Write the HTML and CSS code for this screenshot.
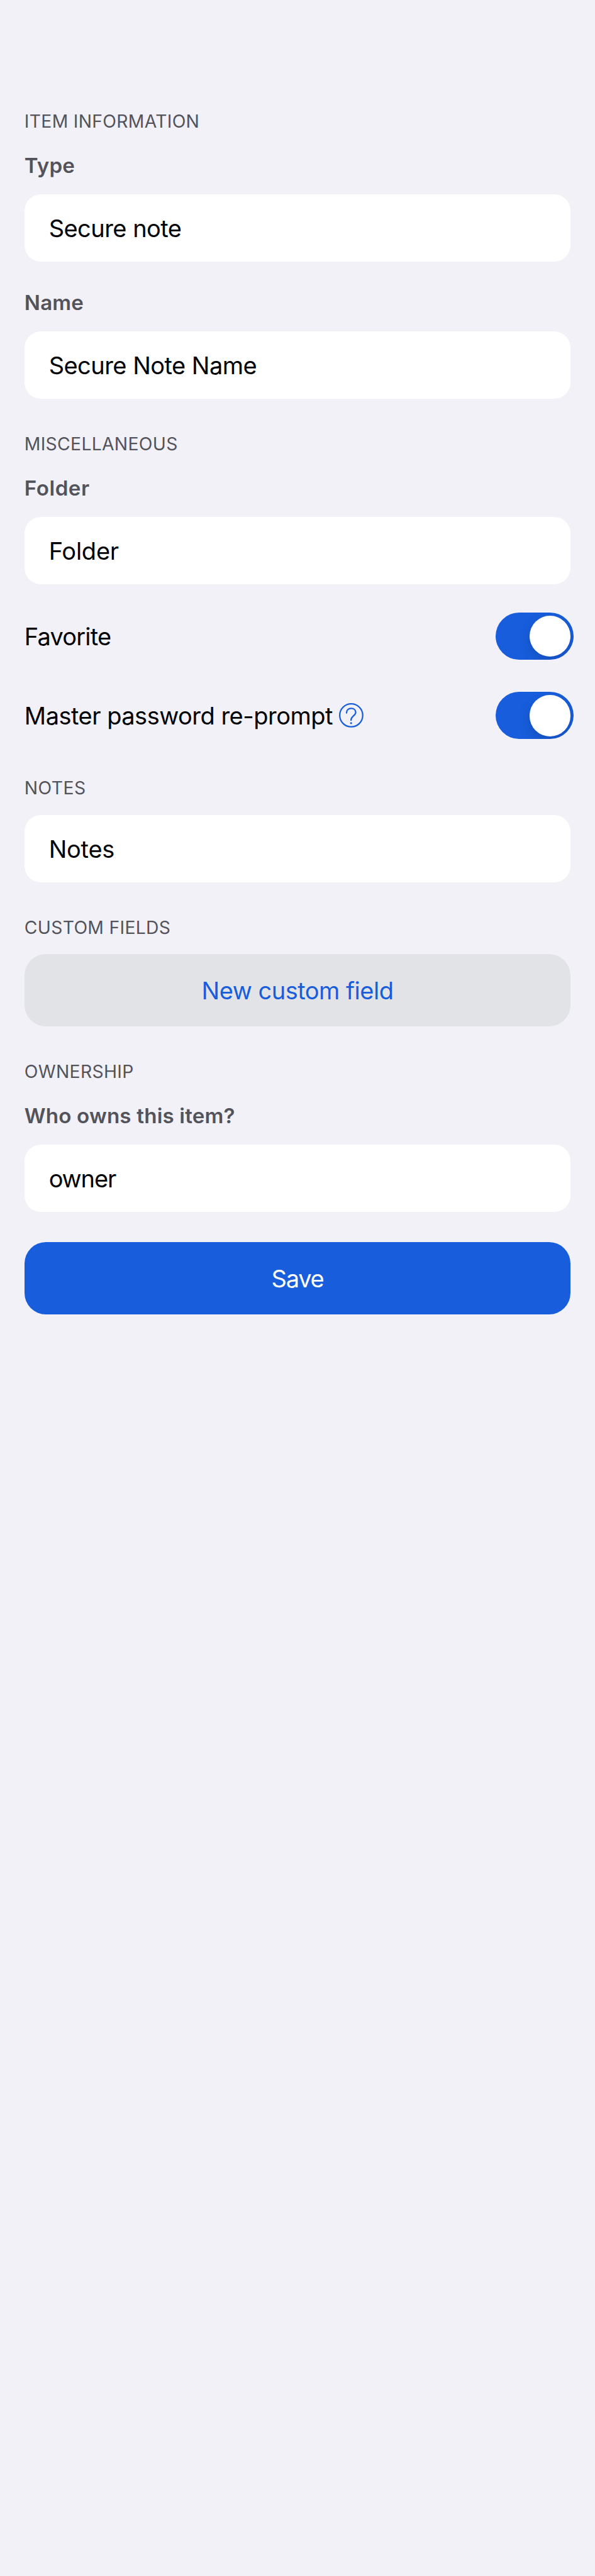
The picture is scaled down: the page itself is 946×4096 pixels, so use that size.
FILE: index.html
```html
<!DOCTYPE html>
<html lang="en">
<head>
<meta charset="utf-8">
<title>Edit item</title>
<link rel="stylesheet" href="styles.css">
</head>
<body>
<main class="form">
  <h2 class="heading">ITEM INFORMATION</h2>
  <label class="label">Type</label>
  <div class="field">Secure note</div>
  <label class="label label-next">Name</label>
  <div class="field">Secure Note Name</div>

  <h2 class="heading">MISCELLANEOUS</h2>
  <label class="label label-wide">Folder</label>
  <div class="field field-short">Folder</div>
  <div class="row">
    <span class="row-text row-text-tight">Favorite</span>
    <span class="toggle"><span class="knob"></span></span>
  </div>
  <div class="row row-last">
    <span class="row-text">Master password re-prompt</span>
    <svg class="help" viewBox="0 0 48 48" fill="none">
      <circle cx="24" cy="24" r="22.6" stroke="#175ddc" stroke-width="2.8"/>
      <path d="M14.8 19.3C14.8 13.6 18.5 10.3 24 10.3C29.5 10.3 32.8 13.8 32.8 18.3C32.8 25 23.6 25.2 23.6 33.6" stroke="#175ddc" stroke-width="2.8" stroke-linecap="round"/>
      <circle cx="23.7" cy="39.3" r="2" fill="#175ddc"/>
    </svg>
    <span class="toggle"><span class="knob"></span></span>
  </div>

  <h2 class="heading heading-solo">NOTES</h2>
  <div class="field field-short">Notes</div>

  <h2 class="heading">CUSTOM FIELDS</h2>
  <button class="button button-secondary">New custom field</button>

  <h2 class="heading">OWNERSHIP</h2>
  <label class="label">Who owns this item?</label>
  <div class="field field-owner">owner</div>
  <button class="button button-primary">Save</button>
</main>
</body>
</html>
```
FILE: styles.css
```css
:root {
  --u: 0.8087px;
}

* {
  box-sizing: border-box;
}

body {
  min-height: 100vh;
  margin: 0;
  background: #f2f1f7;
  color: #000;
  font-family: Inter, "Liberation Sans", sans-serif;
}

.form {
  display: flex;
  flex-direction: column;
  padding: calc(150 * var(--u)) calc(48 * var(--u)) 0;
}

.heading {
  margin: calc(69.1 * var(--u)) 0 calc(30.9 * var(--u));
  color: #53535b;
  font-size: calc(35 * var(--u));
  font-weight: 400;
  line-height: calc(42 * var(--u));
  letter-spacing: 0.0112em;
}

.label {
  margin: calc(8.3 * var(--u)) 0 calc(32 * var(--u));
  color: #53535b;
  font-size: calc(41 * var(--u));
  font-weight: 600;
  line-height: calc(50 * var(--u));
  letter-spacing: 0.005em;
}

.label-next {
  margin-top: calc(56 * var(--u));
}

.label-wide {
  letter-spacing: 0.0156em;
}

.field {
  display: flex;
  align-items: center;
  height: calc(132 * var(--u));
  padding: calc(1.6 * var(--u)) calc(48 * var(--u)) 0;
  border-radius: calc(32 * var(--u));
  background: #fff;
  font-size: calc(47 * var(--u));
  letter-spacing: -0.014em;
}

.field-short {
  letter-spacing: -0.006em;
}

.field-owner {
  letter-spacing: -0.029em;
}

.row {
  display: flex;
  align-items: center;
  height: calc(93 * var(--u));
  margin: calc(56 * var(--u)) calc(-6 * var(--u)) 0 0;
  font-size: calc(47 * var(--u));
  letter-spacing: -0.0135em;
}

.row-last {
  margin-top: calc(63 * var(--u));
}

.row-text-tight {
  letter-spacing: -0.0213em;
}

.heading-solo {
  margin-top: calc(76.1 * var(--u));
  letter-spacing: 0.0163em;
}

.help {
  width: calc(48 * var(--u));
  height: calc(48 * var(--u));
  margin-left: calc(13 * var(--u));
}

.toggle {
  display: flex;
  justify-content: flex-end;
  width: calc(153 * var(--u));
  height: calc(93 * var(--u));
  margin-left: auto;
  padding: calc(6 * var(--u));
  border-radius: calc(47 * var(--u));
  background: #175ddc;
  overflow: hidden;
}

.knob {
  width: calc(81 * var(--u));
  height: calc(81 * var(--u));
  border-radius: 50%;
  background: #fff;
  box-shadow: 0 calc(9 * var(--u)) calc(24 * var(--u)) rgba(0, 0, 0, 0.15);
}

.button {
  height: calc(142 * var(--u));
  padding: 0;
  border: 0;
  border-radius: calc(42 * var(--u));
  font-family: inherit;
  font-size: calc(47 * var(--u));
  letter-spacing: -0.013em;
}

.button-secondary {
  background: #e2e3e7;
  color: #175ddc;
}

.button-primary {
  margin-top: calc(60 * var(--u));
  background: #175ddc;
  color: #fff;
  letter-spacing: -0.034em;
}
```
